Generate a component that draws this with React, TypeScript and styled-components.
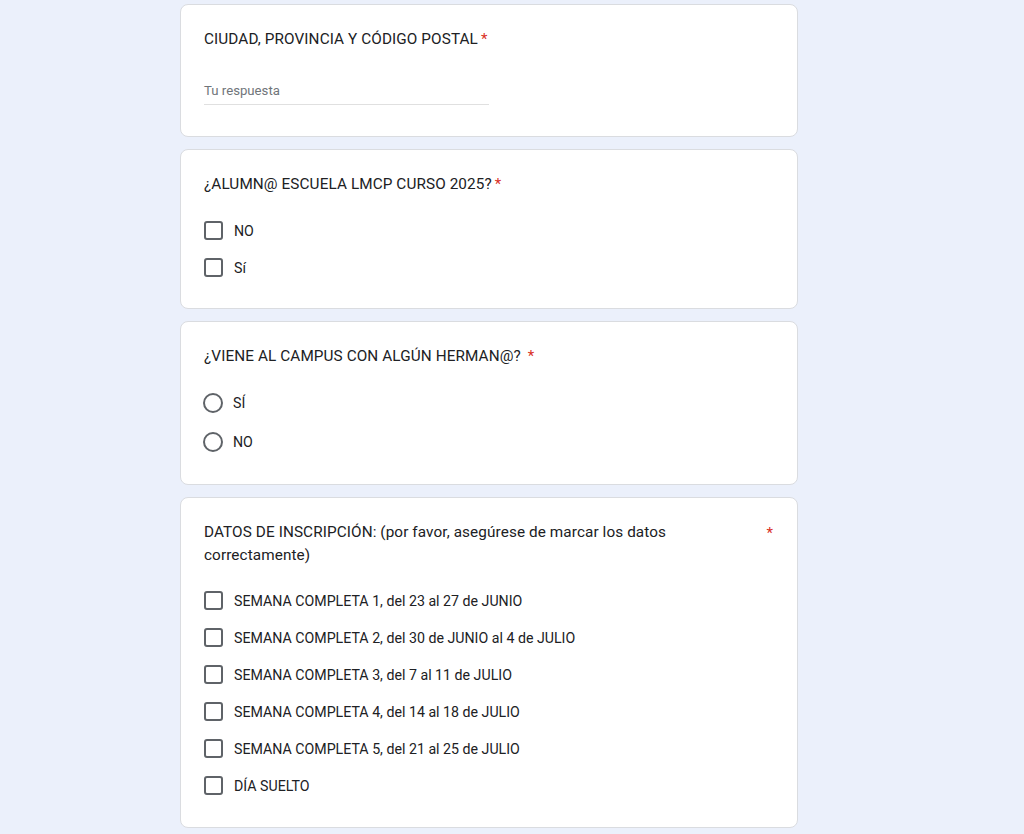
import React from 'react';
import styled, { createGlobalStyle } from 'styled-components';

const GlobalStyle = createGlobalStyle`
  body {
    margin: 0;
    background: #ebf0fb;
    font-family: Roboto, "Liberation Sans", Arial, sans-serif;
    color: #202124;
  }
`;

const Page = styled.div`
  display: flex;
  flex-direction: column;
  gap: 12px;
  width: 618px;
  padding: 4px 0 8px 180px;
`;

const Card = styled.section<{ $pb?: number }>`
  background: #fff;
  border: 1px solid #dadce0;
  border-radius: 8px;
  padding: 22px 24px ${p => p.$pb ?? 23}px 23px;
`;

const TitleRow = styled.div`
  display: flex;
  justify-content: space-between;
  gap: 4px;
  margin-top: 1px;
`;

const Title = styled.div<{ $wide?: boolean }>`
  font-size: 15.3px;
  line-height: ${p => (p.$wide ? '23px' : '24px')};
  letter-spacing: 0.1px;
  max-width: ${p => (p.$wide ? '480px' : 'none')};
`;

const Star = styled.span`
  color: #d93025;
  margin-left: 3px;
  font-size: 15px;
  line-height: 24px;
`;

const AnswerInput = styled.div`
  margin-top: 30px;
  width: 285px;
  padding-bottom: 3px;
  border-bottom: 1px solid #e0e0e0;
  font-size: 13.2px;
  line-height: 20px;
  color: #70757a;
  margin-bottom: 8px;
`;

const Options = styled.div<{ $mt: number }>`
  display: flex;
  flex-direction: column;
  margin-top: ${p => p.$mt}px;
`;

const Option = styled.label<{ $h: number }>`
  display: flex;
  align-items: center;
  gap: 11px;
  height: ${p => p.$h}px;
  font-size: 14.2px;
  cursor: pointer;
`;

const Box = styled.span`
  box-sizing: border-box;
  width: 19px;
  height: 19px;
  border: 2px solid #5f6368;
  border-radius: 3px;
  flex-shrink: 0;
`;

const Radio = styled.span`
  box-sizing: border-box;
  width: 20px;
  height: 20px;
  border: 2px solid #5f6368;
  border-radius: 50%;
  flex-shrink: 0;
  margin-left: -1px;
  margin-right: -1px;
`;

const CheckList = ({ items, mt = 16 }: { items: string[]; mt?: number }) => (
  <Options $mt={mt}>
    {items.map(t => (
      <Option key={t} $h={37}>
        <Box />
        <span>{t}</span>
      </Option>
    ))}
  </Options>
);

const RadioList = ({ items }: { items: string[] }) => (
  <Options $mt={16}>
    {items.map(t => (
      <Option key={t} $h={38.5}>
        <Radio />
        <span>{t}</span>
      </Option>
    ))}
  </Options>
);

export default function App() {
  return (
    <>
      <GlobalStyle />
      <Page>
        <Card>
          <Title>
            CIUDAD, PROVINCIA Y CÓDIGO POSTAL<Star>*</Star>
          </Title>
          <AnswerInput>Tu respuesta</AnswerInput>
        </Card>

        <Card $pb={22}>
          <Title>
            ¿ALUMN@ ESCUELA LMCP CURSO 2025?<Star>*</Star>
          </Title>
          <CheckList items={['NO', 'Sí']} />
        </Card>

        <Card>
          <Title>
            ¿VIENE AL CAMPUS CON ALGÚN HERMAN@? <Star>*</Star>
          </Title>
          <RadioList items={['SÍ', 'NO']} />
        </Card>

        <Card>
          <TitleRow>
            <Title $wide>
              DATOS DE INSCRIPCIÓN: (por favor, asegúrese de marcar los datos correctamente)
            </Title>
            <Star>*</Star>
          </TitleRow>
          <CheckList
            mt={15}
            items={[
              'SEMANA COMPLETA 1, del 23 al 27 de JUNIO',
              'SEMANA COMPLETA 2, del 30 de JUNIO al 4 de JULIO',
              'SEMANA COMPLETA 3, del 7 al 11 de JULIO',
              'SEMANA COMPLETA 4, del 14 al 18 de JULIO',
              'SEMANA COMPLETA 5, del 21 al 25 de JULIO',
              'DÍA SUELTO',
            ]}
          />
        </Card>
      </Page>
    </>
  );
}
